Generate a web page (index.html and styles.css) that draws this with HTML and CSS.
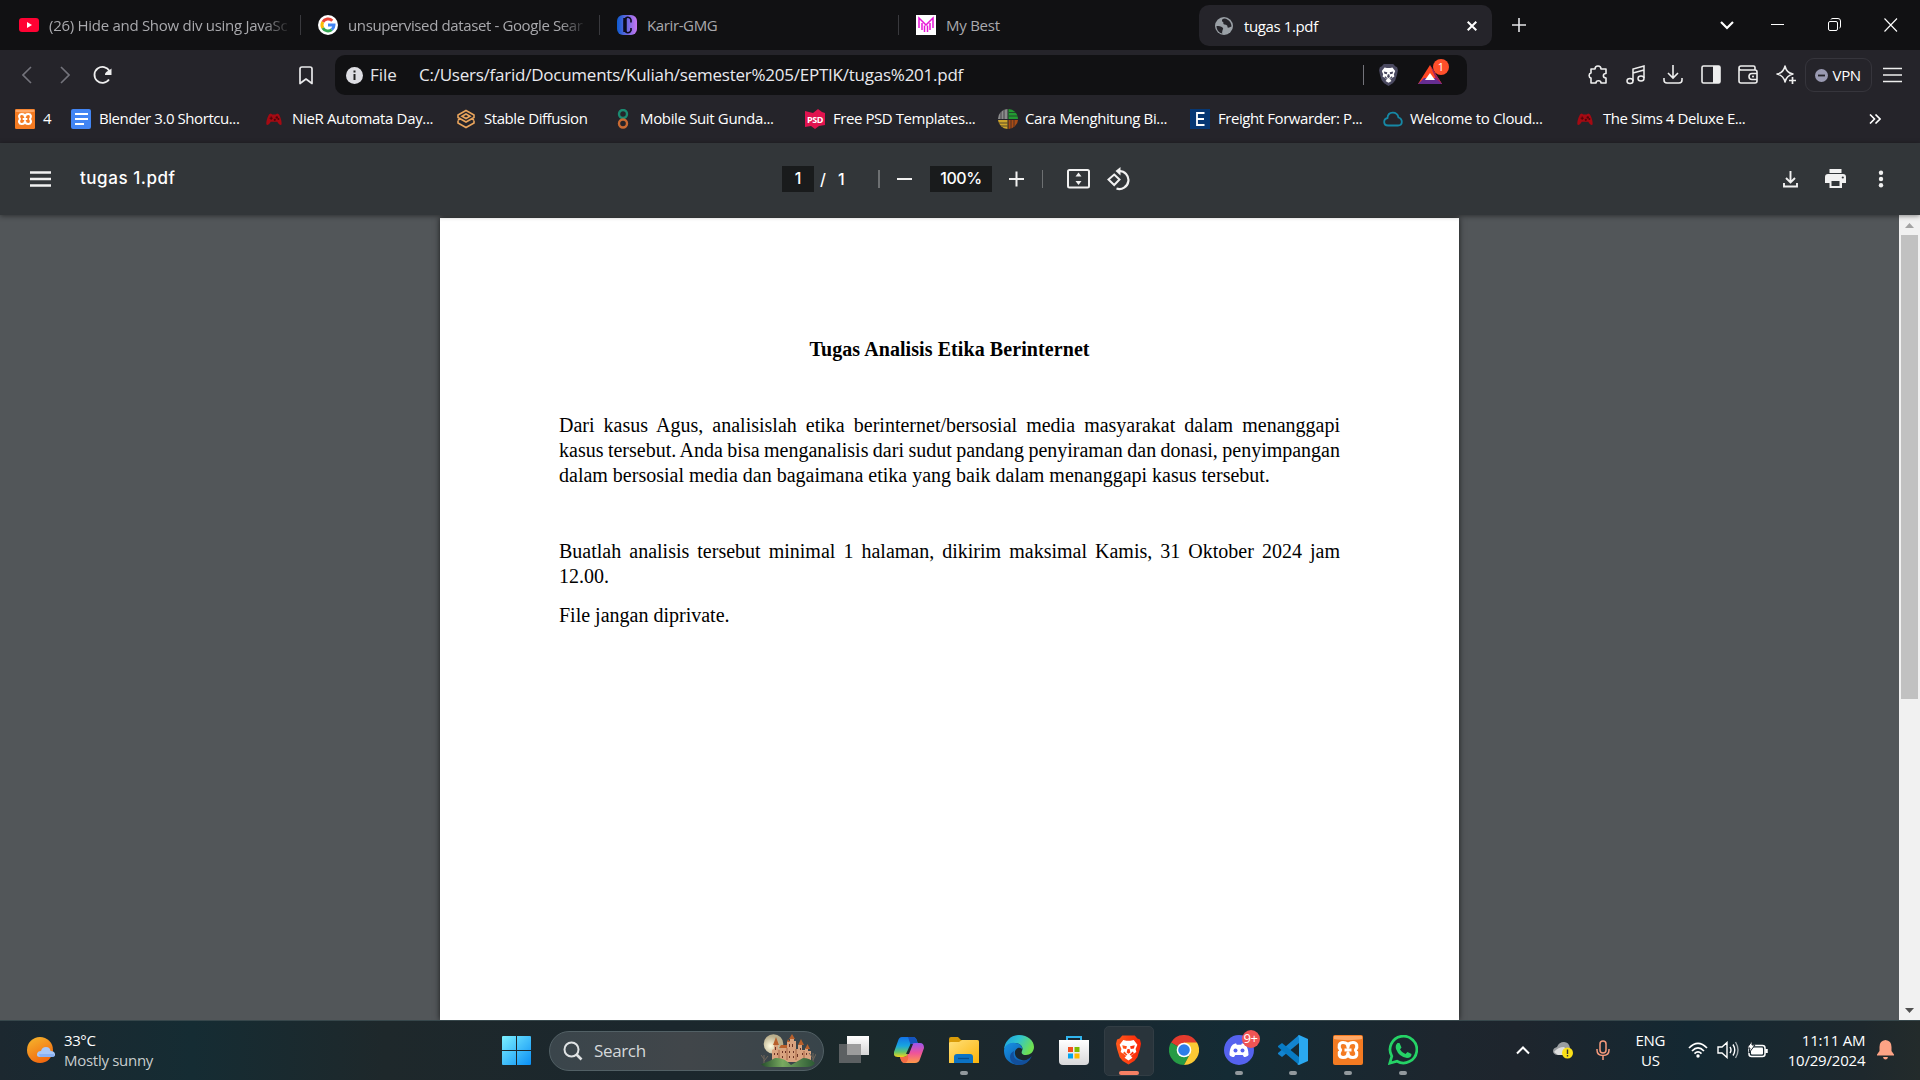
FILE: index.html
```html
<!DOCTYPE html>
<html lang="en">
<head>
<meta charset="utf-8">
<title>tugas 1.pdf</title>
<link rel="stylesheet" href="styles.css">
</head>
<body>
<svg class="defs" width="0" height="0">
  <defs>
    <linearGradient id="win" x1="0" y1="0" x2="1" y2="1"><stop offset="0" stop-color="#7cf0ff"/><stop offset="1" stop-color="#0a8ff5"/></linearGradient>
    <linearGradient id="sun" x1="0" y1="0" x2=".5" y2="1"><stop offset="0" stop-color="#f5b82e"/><stop offset="1" stop-color="#f26a10"/></linearGradient>
    <linearGradient id="cblue" x1="0" y1="0" x2="1" y2="0"><stop offset="0" stop-color="#0c5bd0"/><stop offset="1" stop-color="#c977f0"/></linearGradient>
    <linearGradient id="copA" x1="0" y1="0" x2="0" y2="1"><stop offset="0" stop-color="#1272e8"/><stop offset=".45" stop-color="#18a5df"/><stop offset=".75" stop-color="#63c56a"/><stop offset="1" stop-color="#f5d51c"/></linearGradient>
    <linearGradient id="copB" x1="0" y1="0" x2="0" y2="1"><stop offset="0" stop-color="#9b55ee"/><stop offset=".5" stop-color="#ef539a"/><stop offset="1" stop-color="#ff9a48"/></linearGradient>
    <linearGradient id="fold" x1="0" y1="0" x2="1" y2="1"><stop offset="0" stop-color="#ffe07a"/><stop offset="1" stop-color="#fbb40a"/></linearGradient>
    <linearGradient id="edgeA" x1="0" y1="0" x2="1" y2=".4"><stop offset="0" stop-color="#1b9de2"/><stop offset=".5" stop-color="#2fc3d0"/><stop offset="1" stop-color="#6ee052"/></linearGradient>
    <linearGradient id="edgeB" x1="0" y1="0" x2="1" y2="1"><stop offset="0" stop-color="#1793e6"/><stop offset="1" stop-color="#0c4f9e"/></linearGradient>
    <linearGradient id="store" x1="0" y1="0" x2="0" y2="1"><stop offset="0" stop-color="#fff"/><stop offset="1" stop-color="#d8d8da"/></linearGradient>
    <linearGradient id="brv" x1="0" y1="0" x2="1" y2="0"><stop offset="0" stop-color="#ff5a1c"/><stop offset="1" stop-color="#fb2608"/></linearGradient>
    <radialGradient id="moon" cx=".35" cy=".6"><stop offset="0" stop-color="#fffbe0"/><stop offset="1" stop-color="#b9ae8c"/></radialGradient>
    <linearGradient id="hill" x1="0" y1="0" x2="1" y2="0"><stop offset="0" stop-color="#254e2b"/><stop offset=".4" stop-color="#79aa60"/><stop offset="1" stop-color="#2b5934"/></linearGradient>
    <linearGradient id="task" x1="0" y1="0" x2="0" y2="1"><stop offset="0" stop-color="#fff"/><stop offset="1" stop-color="#d5d5d5"/></linearGradient>
    <symbol id="xampp" viewBox="0 0 30 30"><rect width="30" height="30" rx="2" fill="#f47b22"/><path d="M1 1h28v3c-8 1.500-20 1.500-28 0z" fill="#ffa866"/><path d="M15 12C15 8.500 13 7.500 10 7.500c-4 0-5 4-2.500 7.500C5 18.500 6 22.500 10 22.500c3 0 5-1 5-4.500 0 3.500 2 4.500 5 4.500 4 0 5-4 2.500-7.500C25 11.500 24 7.500 20 7.500c-3 0-5 1-5 4.500zM11.500 15h7" fill="none" stroke="#fff" stroke-width="3.200" stroke-linejoin="round"/></symbol>
    <symbol id="pad" viewBox="0 0 20 20"><path d="M4 4l2-1 2 1.500h4L14 3l2 1c2 3 4 9 3.500 13-1.500 1.500-3 0-5.500-3.500H6C3.500 17 2 18.500.5 17 0 13 2 7 4 4z" fill="#a50a13"/><path d="M4.500 9h4M6.500 7v4" stroke="#4d0508" stroke-width="1.400"/><circle cx="13.500" cy="8" r="1.500" fill="#4d0508"/><circle cx="11" cy="11" r="1.400" fill="#4d0508"/><circle cx="15.500" cy="10" r="1.200" fill="#4d0508"/></symbol>
    <symbol id="lion" viewBox="0 0 24 28"><path d="M6 0h12l2.500 3L23 4l1 4-1 5-2.500 8-3 3.500L12 28l-5.500-3.500-3-3.500L1 13 0 8l1-4 2.500-1z"/><path d="M7 4.500l3 .5h4l3-.5L20.500 9l-1.700 4 .7 3-4 2.500-1.300 1.300 1.600 1.700L12 24l-3.800-2.500 1.600-1.700-1.300-1.300-4-2.500.7-3-1.700-4z" fill="#fff"/><path d="M6 9.500l4.500 1-.7 2.500-3-.5zM18 9.500l-4.500 1 .7 2.500 3-.5zM11 13h2l.8 3.500L12 17.700l-1.800-1.200zM8 15.500l3 3-1 .7-3.300-2.200zM16 15.500l-3 3 1 .7 3.300-2.200z"/></symbol>
  </defs>
</svg>

<header class="tabstrip">
  <div class="tab">
    <svg width="20" height="20"><rect y="3" width="20" height="14" rx="3" fill="#ff0233"/><path d="M8 7v6l5-3z" fill="#fff"/></svg>
    <span class="tab-title fade">(26) Hide and Show div using JavaSc</span>
  </div>
  <div class="tab">
    <svg width="20" height="20"><circle cx="10" cy="10" r="10" fill="#fff"/><g fill="none" stroke-width="3"><path d="M14.300 5.700A6 6 0 0 0 4.800 7" stroke="#ea4335"/><path d="M4.800 7a6 6 0 0 0 0 6" stroke="#fbbc05"/><path d="M4.800 13a6 6 0 0 0 9 1.600" stroke="#34a853"/><path d="M13.800 14.600A6 6 0 0 0 16 10h-6" stroke="#4285f4"/></g></svg>
    <span class="tab-title fade">unsupervised dataset - Google Sear</span>
  </div>
  <div class="tab">
    <svg width="20" height="20"><rect width="20" height="20" rx="6" fill="url(#cblue)"/><path d="M14 7.500V4.500M14 4.500C12.500 1 8 1.500 7.500 6v8c.5 4.500 5 5 6.500 1.500V13" fill="none" stroke="#0b0b1c" stroke-width="1.600"/><path d="M8 3v14" stroke="#0b0b1c" stroke-width="3.500"/></svg>
    <span class="tab-title">Karir-GMG</span>
  </div>
  <div class="tab tab-last">
    <svg width="20" height="20"><rect width="20" height="20" fill="#fff"/><path d="M3 13V3l7 7 7-7v10M6 8v7M8.500 10.500V17M11.500 10.500V17M14 8v7" fill="none" stroke="#e815d8" stroke-width="1.500"/></svg>
    <span class="tab-title">My Best</span>
  </div>
  <div class="tab-active">
    <svg width="18" height="18"><circle cx="9" cy="9" r="9" fill="#9aa0a6"/><path d="M9.500 1.500c-3 0-3 3-1.500 3.500 1 .5-.5 2 1.500 2.500s3 .5 3 2.500 3-.5 4-.5c0-4-3-7.500-7-8zM1.500 9c2.500 0 4.500 0 6 1.500s0 2 0 3-1 2 0 3C4 16 1.500 13 1.500 9z" fill="#25242a"/></svg>
    <span class="tab-title">tugas 1.pdf</span>
    <svg class="tab-close" width="10" height="10"><path d="M.7.7l8.600 8.600M9.300.7L.7 9.300" stroke="#fff" stroke-width="2"/></svg>
  </div>
  <svg class="new-tab" width="14" height="14"><path d="M7 0v14M0 7h14" stroke="#e5e5e8" stroke-width="1.600"/></svg>
  <div class="win-controls">
    <svg class="tabs-list" width="14" height="14"><path d="M1 4l6 6 6-6" fill="none" stroke="#fff" stroke-width="2.200"/></svg>
    <svg width="14" height="14"><path d="M0 6.500h13" stroke="#fff"/></svg>
    <svg width="14" height="14"><g fill="none" stroke="#fff"><rect x=".5" y="3.500" width="9" height="9" rx="1.500"/><path d="M3 1.500Q3 .5 5 .5h5q2.500 0 2.500 2.500v5q0 2-1 2"/></g></svg>
    <svg width="14" height="14"><path d="M.5.5l12.500 13M13 .5L.5 13.500" stroke="#fff" stroke-width="1.100"/></svg>
  </div>
</header>

<nav class="navbar">
  <div class="nav-left">
    <svg width="10" height="18"><path d="M9 1L1 9l8 8" fill="none" stroke="#74747c" stroke-width="1.600"/></svg>
    <svg width="10" height="18"><path d="M1 1l8 8-8 8" fill="none" stroke="#74747c" stroke-width="1.600"/></svg>
    <svg class="reload" width="20" height="20"><path d="M16 14.500A8 8 0 1 1 16.500 6" fill="none" stroke="#eee" stroke-width="1.800"/><path d="M18.500 3.500v6.500h-6.500c0-3.500 3-3.500 6.500-6.500z" fill="#eee"/></svg>
    <svg class="mark" width="14" height="19"><path d="M1 17.500V3q0-2 2-2h8q2 0 2 2v14.500l-6-4.500z" fill="none" stroke="#e8e8ea" stroke-width="1.700" stroke-linejoin="round"/></svg>
  </div>
  <div class="address">
    <svg width="17" height="17"><circle cx="8.500" cy="8.500" r="8.500" fill="#dedee3"/><path d="M8.500 3.500v2M8.500 7v6" stroke="#222" stroke-width="2"/></svg>
    <span class="scheme">File</span>
    <span class="url">C:/Users/farid/Documents/Kuliah/semester%205/EPTIK/tugas%201.pdf</span>
    <i class="address-sep"></i>
    <svg class="shield" width="19" height="22" fill="#4a4960"><use href="#lion" width="19" height="22"/></svg>
    <svg class="bat" width="31" height="26"><path d="M12 6l12 19H0z" fill="#ff4724"/><path d="M0 25h24l-5-6H6z" fill="#662d91"/><path d="M12 6l12 19-6-5z" fill="#9e1f63"/><path d="M12 14l5 7H7z" fill="#fff"/><circle cx="23" cy="8" r="8" fill="#ff4f2b"/><text x="23" y="12" text-anchor="middle" class="badge-num">1</text></svg>
  </div>
  <div class="extensions">
    <svg width="20" height="20"><path d="M3 4h4c0-4 6-4 6 0h5v4.500c-3.500 0-3.500 4.500 0 4.500v5h-5c0-3-5-3-5 0H3v-5c-2.500-.5-2.500-4.500 0-5z" fill="none" stroke="#eee" stroke-width="1.600" stroke-linejoin="round"/></svg>
    <svg width="20" height="20"><path d="M7 16V4l11-3v12M7 8l11-3" fill="none" stroke="#eee" stroke-width="1.500"/><ellipse cx="4" cy="16" rx="3" ry="2.500" fill="none" stroke="#eee" stroke-width="1.500"/><ellipse cx="15" cy="13.500" rx="3" ry="2.500" fill="none" stroke="#eee" stroke-width="1.500"/></svg>
    <svg width="20" height="20"><path d="M10 0v13M5 8l5 5 5-5M1 13v2q0 3 3 3h12q3 0 3-3v-2" fill="none" stroke="#eee" stroke-width="1.600"/></svg>
    <svg width="20" height="20"><rect x="1" y="1" width="18" height="17" rx="1.500" fill="none" stroke="#eee" stroke-width="1.600"/><path d="M12 1h7v17h-7z" fill="#eee"/></svg>
    <svg width="20" height="20"><path d="M17 5V2.500Q17 1 15.500 1H3Q1 1 1 3t2 2h14q2 0 2 2v9q0 2-2 2H3q-2 0-2-2V3M19 8.500h-5q-3 0-3 3t3 3h5" fill="none" stroke="#eee" stroke-width="1.600"/><circle cx="15" cy="11.500" r="1" fill="#eee"/></svg>
    <svg width="20" height="20"><path d="M9 1q1.500 7 8 8-6.500 1.500-8 8-1.500-6.500-8-8 6.500-1 8-8z" fill="none" stroke="#eee" stroke-width="1.500" stroke-linejoin="round"/><path d="M16.500 12v7M13 15.500h7" stroke="#eee" stroke-width="1.700"/></svg>
  </div>
  <div class="vpn"><svg width="13" height="13"><circle cx="6.500" cy="6.500" r="6.500" fill="#9a9ab2"/><path d="M3 6.500h7" stroke="#25242a" stroke-width="1.800"/></svg><span>VPN</span></div>
  <svg class="menu" width="19" height="16"><path d="M0 1.500h19M0 8h19M0 14.500h19" stroke="#eee" stroke-width="1.700"/></svg>
</nav>

<nav class="bookmarks">
  <div class="bm bm-4"><svg width="20" height="20"><use href="#xampp" width="20" height="20"/></svg><span>4</span></div>
  <div class="bm bm-docs"><svg width="20" height="20"><rect width="20" height="20" rx="2" fill="#4285f4"/><path d="M4 5h13M4 10h13M4 15h9" stroke="#fff" stroke-width="2"/></svg><span>Blender 3.0 Shortcu...</span></div>
  <div class="bm bm-nier"><svg width="20" height="20"><use href="#pad" y="2" width="20" height="16"/></svg><span>NieR Automata Day...</span></div>
  <div class="bm bm-sd"><svg width="20" height="20"><path d="M10 1.500l8 4.500v2.500L10 13 2 8.500V6zM2 11.500V14l8 4.500 8-4.500v-2.500M6 7.200l4 2.300 4-2.300L10 5zM2 11l3-1.500M18 11l-3-1.500" fill="none" stroke="#e9a45c" stroke-width="1.600"/></svg><span>Stable Diffusion</span></div>
  <div class="bm bm-suit"><svg width="20" height="20"><circle cx="10" cy="5" r="4" fill="none" stroke="#1b8a71" stroke-width="2.400"/><circle cx="10" cy="14.500" r="4" fill="none" stroke="#c96a33" stroke-width="2.400"/></svg><span>Mobile Suit Gunda...</span></div>
  <div class="bm bm-psd"><svg width="20" height="20"><path d="M0 2l8 2 5-4 4 3 3 1v12l-6 1-4 3-4-3-6 1z" fill="#e0134f"/><text x="10" y="13.500" text-anchor="middle" class="psd">PSD</text></svg><span>Free PSD Templates...</span></div>
  <div class="bm bm-cara"><svg width="20" height="20"><path d="M9.500 0v10H0A10 10 0 0 1 9.500 0z" fill="#8c8c8c"/><path d="M10.500 0v10H20A10 10 0 0 0 10.500 0z" fill="#239b32"/><path d="M9.500 20v-9H0a10 10 0 0 0 9.500 9z" fill="#cda32b"/><path d="M10.500 20v-9H20a10 10 0 0 1-9.500 9z" fill="#a84c16"/><path d="M3 2v8M6 0v10M13 11v9M16 11v8M11 3.500h9M11 7h9M0 14h9.500M0 17h9.500" stroke="#25242a" stroke-width=".7"/></svg><span>Cara Menghitung Bi...</span></div>
  <div class="bm bm-freight"><svg width="20" height="20"><rect width="20" height="20" fill="#063773"/><path d="M14.500 4H7v12h7.500M7 10h7" fill="none" stroke="#fff" stroke-width="1.800"/></svg><span>Freight Forwarder: P...</span></div>
  <div class="bm bm-cloud"><svg width="20" height="20"><path d="M5 16.500C0 16.500 0 10 4.500 9 5 2 14 2 15.500 8.500 20 10 20 16.500 15 16.500z" fill="none" stroke="#1688a5" stroke-width="1.800"/></svg><span>Welcome to Cloud...</span></div>
  <div class="bm bm-sims"><svg width="20" height="20"><use href="#pad" y="2" width="20" height="16"/></svg><span>The Sims 4 Deluxe E...</span></div>
  <svg class="more" width="12" height="10"><path d="M1 .5L5.500 5 1 9.500M6.500.5L11 5 6.500 9.500" fill="none" stroke="#fff" stroke-width="1.600"/></svg>
</nav>

<section class="pdfbar">
  <svg class="pdf-menu" width="21" height="16"><path d="M0 1.500h21M0 8h21M0 14.500h21" stroke="#f1f1f1" stroke-width="2.300"/></svg>
  <span class="pdf-title">tugas 1.pdf</span>
  <div class="pdf-center">
    <span class="page-box">1</span><span class="slash">/</span><span class="total">1</span>
    <i class="pdf-sep"></i>
    <svg class="minus" width="15" height="16"><path d="M0 8h15" stroke="#f1f1f1" stroke-width="2"/></svg>
    <span class="zoom-box">100%</span>
    <svg class="plus" width="15" height="16"><path d="M0 8h15M7.500.5v15" stroke="#f1f1f1" stroke-width="2"/></svg>
    <i class="pdf-sep thin"></i>
    <svg class="fit" width="23" height="20"><rect x="1" y="1" width="21" height="17.500" rx="1.500" fill="none" stroke="#f1f1f1" stroke-width="2"/><path d="M11.500 3.500L14.500 7.500h-6zM11.500 16L8.500 12h6z" fill="#f1f1f1"/></svg>
    <svg class="rotate" width="23" height="24"><path d="M7.200 7.500L12.500 12.500 7.200 18 1.500 12.500z" fill="none" stroke="#f1f1f1" stroke-width="2"/><path d="M12 4a9 9 0 1 1-2.500 17.500" fill="none" stroke="#f1f1f1" stroke-width="2.200"/><path d="M13.500 0v8.500L8.500 4z" fill="#f1f1f1"/></svg>
  </div>
  <div class="pdf-actions">
    <svg width="15" height="17"><path d="M7.500 0v11M3 7l4.500 4.500L12 7M1 12v3.500h13V12" fill="none" stroke="#f1f1f1" stroke-width="1.900"/></svg>
    <svg class="print" width="21" height="20"><path d="M4.500 0h12v4h-12zM3 5h15q3 0 3 3v6h-4v5H4.500v-5H0V8q0-3 3-3z" fill="#f1f1f1"/><path d="M6.500 12h8v5h-8z" fill="#323639"/><circle cx="17.800" cy="8.500" r="1.100" fill="#323639"/></svg>
    <svg class="dots" width="6" height="18"><g fill="#f1f1f1"><circle cx="3" cy="2.700" r="2.200"/><circle cx="3" cy="9" r="2.200"/><circle cx="3" cy="15.300" r="2.200"/></g></svg>
  </div>
</section>

<main class="viewer">
  <article class="paper">
    <h1>Tugas Analisis Etika Berinternet</h1>
    <p>Dari kasus Agus, analisislah etika berinternet/bersosial media masyarakat dalam menanggapi <span class="tight">kasus tersebut. Anda bisa menganalisis dari sudut pandang penyiraman dan donasi, penyimpangan</span> dalam bersosial media dan bagaimana etika yang baik dalam menanggapi kasus tersebut.</p>
    <p class="due">Buatlah analisis tersebut minimal 1 halaman, dikirim maksimal Kamis, 31 Oktober 2024 jam 12.00.</p>
    <p class="note">File jangan diprivate.</p>
  </article>
  <aside class="scrollbar">
    <svg width="21" height="20"><path d="M10.500 8L15 13H6z" fill="#a3a3a3"/></svg>
    <i class="thumb"></i>
    <svg class="down" width="21" height="20"><path d="M10.500 13L15 8H6z" fill="#505050"/></svg>
  </aside>
</main>

<footer class="taskbar">
  <div class="weather">
    <svg width="29" height="28"><circle cx="13" cy="14" r="13" fill="url(#sun)"/><path d="M13 21q-3.500 0-3-3t4-3q1-4 5-4t4.500 4q4 0 4.500 3t-3 3z" fill="#a7c7f8"/><path d="M12 18h15v3H13z" fill="#6e9df0" opacity=".5"/></svg>
    <div><b>33°C</b><span>Mostly sunny</span></div>
  </div>
  <svg class="start" width="29" height="29"><path d="M0 1q0-1 1-1h13v14H0zM15 0h13q1 0 1 1v13H15zM0 15h14v14H1q-1 0-1-1zM15 15h14v13q0 1-1 1H15z" fill="url(#win)"/></svg>
  <div class="search">
    <svg width="20" height="20"><circle cx="8.500" cy="8.500" r="7" fill="none" stroke="#e0e3e4" stroke-width="2"/><path d="M13.500 13.500l5 5" stroke="#e0e3e4" stroke-width="2.600"/></svg>
    <span>Search</span>
    <svg class="castle" width="55" height="33"><circle cx="12.500" cy="10" r="9.800" fill="url(#moon)"/><path d="M11 28V16l2-1v-4h4v4h3v-2h6V7h3V4h4v3h2v8h2v-4h4v5h3v-2h3v3h3v11z" fill="#d9a37f"/><path d="M12 11l3-8 3 8zM28 5l3-5 3 5zM37 11l3-6 3 6zM44 15l2.500-5 2.500 5zM18 14l2-3h6v3zM26 8l1-3 2 3z" fill="#b8602c"/><g fill="#6c3426"><path d="M14 13h1v3h-1zM13 19h1v2h-1zM16 19h1v2h-1zM21 17h1v2h-1zM24 17h1v2h-1zM21 22h1v2h-1zM28 10h1v3h-1zM31 10h1v3h-1zM28 17h1v2h-1zM32 17h1v2h-1zM39 14h1v2h-1zM41 19h1v2h-1zM45 19h1v2h-1zM36 20h1v3h-1zM28 22h1v2h-1zM32 22h1v2h-1z"/></g><path d="M18 16v10M26 14v12M35 15v11M43 17v9" stroke="#a86848"/><path d="M3 30V21M3 25l-3-4M3 27l4-5M52 29V19M52 24l-4-5M52 26l3-6" stroke="#71675b" fill="none"/><path d="M0 30q8-2 14-6 9-1 16 7l12-7q7 0 12 5-2 4-9 4H8q-6 0-8-3z" fill="url(#hill)"/></svg>
  </div>
  <div class="apps">
    <div class="app"><svg width="30" height="30"><path d="M0 9h22v19H0z" fill="#5c6062"/><path d="M8 1h22v19H8z" fill="url(#task)"/><path d="M8 9h14v11H8z" fill="#9c9c9c"/></svg></div>
    <div class="app"><svg width="30" height="30"><path d="M8 2h11q3 0 4 4l1 3h-4q-3 0-4 4l-2 6q-1 3-5 3H4q-5 0-4-5L4 6q1-4 4-4z" fill="url(#copA)"/><path d="M14 2h5q3 0 4 4l1 3h-4q-2 0-3 2z" fill="#1554bd"/><path d="M26 8q4 0 4 5l-4 11q-1 4-5 4H11q-3 0-4-3l-1-3h4q3 0 4-3l3-8q1-3 4-3z" fill="url(#copB)"/><path d="M12 19l4.500-10h2.500l-4 10z" fill="#1b2830"/><path d="M6 22h4q3 0 4-3 1 8-3 9-3 0-4-3z" fill="#f36c45"/></svg></div>
    <div class="app open"><svg width="30" height="30"><path d="M0 4q0-2 2-2h7l3 3h16q2 0 2 2v6H0z" fill="#d99b08"/><path d="M0 8q0-1 2-1h8l3-2h15q2 0 2 2v21H0z" fill="url(#fold)"/><path d="M5 28v-6q0-3 3-3h13q3 0 3 3v6z" fill="#0c73c4"/><path d="M9 23.500h11" stroke="#0a4d8a" stroke-width="1.300"/></svg></div>
    <div class="app"><svg width="30" height="30"><path d="M0 15A15 15 0 0 1 15 0c9 0 15 6 15 12 0 5-4 8-8 8-4 0-5-2-4-4 2-4-2-8-7-8S1 11 0 15z" fill="url(#edgeA)"/><path d="M0 15c1-5 6-8 11-7 5 0 8 4 7 6-3-3-8 0-7 5 1 6 9 8 15 5-5 7-14 7-19 4S0 21 0 15z" fill="url(#edgeB)"/><path d="M10 16q-2 9 7 10 6 0 11-5-4 9-13 9-9-1-9-8 0-4 4-6z" fill="#124f9b"/></svg></div>
    <div class="app"><svg width="30" height="30"><path d="M8 6V2h14v4" fill="none" stroke="#31b5ee" stroke-width="2"/><path d="M0 5h30v21q0 4-4 4H4q-4 0-4-4z" fill="url(#store)"/><path d="M9 12h5v5H9z" fill="#f25022"/><path d="M15.500 12h5v5h-5z" fill="#7fba00"/><path d="M9 18.500h5v5H9z" fill="#00a4ef"/><path d="M15.500 18.500h5v5h-5z" fill="#ffb900"/></svg></div>
    <div class="app open current"><svg width="25" height="30" fill="url(#brv)"><use href="#lion" width="25" height="30"/></svg></div>
    <div class="app"><svg width="30" height="30"><path d="M15 15L2 7.500A15 15 0 0 1 28 7.500z" fill="#e33b2e"/><path d="M15 15L2 7.500A15 15 0 0 0 15 30l6-11z" fill="#269b45"/><path d="M15 15l6 4-6 11A15 15 0 0 0 28 7.500H15z" fill="#fcc934"/><circle cx="15" cy="15" r="7.300" fill="#fff"/><circle cx="15" cy="15" r="5.800" fill="#2d7de9"/></svg></div>
    <div class="app open"><svg width="30" height="30"><circle cx="15" cy="15" r="15" fill="#5562ee"/><path d="M10 9l2-.7.8 1.400h4.400l.8-1.400L20 9c3 1 4.500 6 4.500 11-1 1.500-3 2-4.500 2l-1.300-2h-7.400L10 22c-2 0-3.500-.5-4.500-2C5.500 15 7 10 10 9z" fill="#fff"/><circle cx="11.500" cy="15.500" r="2" fill="#5562ee"/><circle cx="18.500" cy="15.500" r="2" fill="#5562ee"/></svg><em class="count">9+</em></div>
    <div class="app open"><svg width="30" height="30"><path d="M21 0v8L4 22l-4-3v-1L21 0z" fill="#1384cf"/><path d="M0 11l4-3 17 14v8L0 12z" fill="#087bc4"/><path d="M21 0l9 4v22l-9 4-2-1q2 0 2-3V4q0-3-1-3z" fill="#2aa8f0"/></svg></div>
    <div class="app open"><svg width="30" height="30"><use href="#xampp" width="30" height="30"/></svg></div>
    <div class="app open"><svg width="30" height="30"><path d="M1.800 28.200l2-7A13.400 13.400 0 1 1 9 26.300z" fill="none" stroke="#25d366" stroke-width="2.700"/><path d="M9.500 8h2l2 4.500-1.500 2q2 3.500 5.500 4.500l2-2 4 2q0 4-4.500 4Q11 22 8 14q-1-4 1.500-6z" fill="#25d366"/></svg></div>
  </div>
  <div class="tray">
    <svg class="t-up" width="14" height="9"><path d="M1 7.500l6-6 6 6" fill="none" stroke="#fff" stroke-width="2"/></svg>
    <svg class="t-cloud" width="21" height="18"><path d="M4 14q-4-1-4-4t4-4q2-5 7-5t6 6l2 7z" fill="#9a9da0"/><path d="M1 11q4-5 10-5l4 4-3 4H5z" fill="#dedede"/><circle cx="14.500" cy="12" r="5.500" fill="#fbe017"/><path d="M14.500 8.500v4.500M14.500 14v1.500" stroke="#333" stroke-width="1.400"/></svg>
    <svg class="t-mic" width="14" height="20"><g fill="none" stroke="#f59a7c" stroke-width="1.500"><rect x="4" y="1" width="6" height="12" rx="3"/><path d="M1 9v1q0 5.500 6 5.500T13 10V9M7 16v4"/></g></svg>
    <div class="lang">ENG<br>US</div>
    <svg class="t-wifi" width="20" height="16"><g fill="none" stroke="#fff" stroke-width="1.700"><path d="M1 6q9-9 18 0M4 9q6-6 12 0M6.500 11.700q3.500-3.500 7 0"/></g><circle cx="10" cy="14" r="1.700" fill="#fff"/></svg>
    <svg class="t-vol" width="22" height="18"><g fill="none" stroke="#fff" stroke-width="1.400"><path d="M1 6h4l5-4.500v15L5 12H1zM13 6q2 3 0 6M16 3.500q3.500 5.500 0 11"/><path d="M18.500 1q5 8 0 16" opacity=".6"/></g></svg>
    <svg class="t-bat" width="22" height="18"><rect x="2" y="4.500" width="16" height="11" rx="2.500" fill="none" stroke="#fff" stroke-width="1.500"/><rect x="4" y="6.500" width="12" height="7" rx="1" fill="#fff"/><path d="M19.500 8v4" stroke="#fff" stroke-width="2.500"/><path d="M5 0L0 7h3l-1 5 6-8H5z" fill="#fff" stroke="#1a252d"/></svg>
    <div class="clock">11:11 AM<br>10/29/2024</div>
    <svg class="t-bell" width="17" height="20"><path d="M8.500 0q6 .5 6 7v4l2.500 3.500v1H0v-1L2.500 11V7q0-6.500 6-7zM6 17h5q-.5 2.500-2.500 2.500T6 17z" fill="#fda385"/></svg>
  </div>
</footer>
</body>
</html>
```
FILE: styles.css
```css
* { box-sizing: border-box; }
body {
  margin: 0;
  width: 1920px;
  height: 1080px;
  overflow: hidden;
  display: flex;
  flex-direction: column;
  background: #525659;
  color: #fff;
  font: 15px/20px "Open Sans", "Noto Sans", sans-serif;
}
.defs { position: absolute; }
svg { display: block; flex: none; }
span, div { white-space: nowrap; }

/* Tab strip */
.tabstrip {
  display: flex;
  align-items: center;
  height: 50px;
  flex: none;
  background: #111113;
  letter-spacing: -0.380px;
}
.tab {
  display: flex;
  align-items: center;
  gap: 10px;
  width: 299px;
  height: 20px;
  padding-left: 17px;
  border-right: 1px solid #39393d;
  color: #a9a9ad;
}
.tab:first-child { width: 301px; padding-left: 19px; letter-spacing: -0.280px; }
.tab-last { border: 0; width: 300px; }
.tab-last .tab-title { letter-spacing: -0.250px; }
.fade {
  mask-image: linear-gradient(90deg, #000 90%, rgba(0, 0, 0, .15) 100%);
}
.tab-active {
  display: flex;
  align-items: center;
  width: 293px;
  height: 41px;
  padding: 0 15px 0 16px;
  gap: 11px;
  margin-top: 1px;
  border-radius: 10px;
  background: #25242a;
}
.tab-close { margin-left: auto; }
.new-tab { margin-left: 20px; }
.win-controls {
  display: flex;
  gap: 42.500px;
  margin: 0 22px 0 auto;
}
.tabs-list { margin-right: -5px; }

/* Navigation row */
.navbar {
  display: flex;
  align-items: center;
  height: 50px;
  flex: none;
  background: #25242a;
}
.nav-left {
  display: flex;
  align-items: center;
  width: 335px;
  padding-left: 22px;
}
.nav-left svg + svg { margin-left: 28px; }
.nav-left .reload { margin-left: 23px; }
.nav-left .mark { margin-left: 186px; }
.address {
  display: flex;
  align-items: center;
  width: 1132px;
  height: 40px;
  padding-left: 11px;
  border-radius: 10px;
  background: #111113;
  font-size: 17px;
}
.scheme { width: 49px; margin-left: 7px; color: #e4e4e8; }
.url { width: 944px; color: #e9e9ee; letter-spacing: -0.240px; }
.address-sep { width: 1px; height: 20px; background: #73737a; }
.shield { margin-left: 15px; }
.bat { margin: -6px 0 0 20px; }
.badge-num { font: 11px "Open Sans", sans-serif; fill: #fff; }
.extensions { display: flex; gap: 17.500px; margin-left: 121px; }
.vpn {
  display: flex;
  align-items: center;
  gap: 5px;
  width: 67px;
  height: 34px;
  margin-left: 9px;
  padding-left: 9px;
  border: 1px solid #36353c;
  border-radius: 9px;
  letter-spacing: -0.300px;
}
.menu { margin-left: 11px; }

/* Bookmarks */
.bookmarks {
  display: flex;
  align-items: center;
  height: 43px;
  flex: none;
  padding: 0 0 5px 15px;
  background: #25242a;
  letter-spacing: -0.430px;
}
.bm { display: flex; gap: 8px; flex: none; }
.bm span { line-height: 18px; }
.bm-4 { width: 56px; }
.bm-docs { width: 193px; }
.bm-nier { width: 192px; letter-spacing: -0.350px; }
.bm-sd { width: 157px; }
.bm-suit { width: 192px; gap: 7px; letter-spacing: -0.350px; }
.bm-psd { width: 193px; }
.bm-cara { width: 192px; gap: 7px; letter-spacing: -0.350px; }
.bm-freight { width: 193px; }
.bm-cloud { width: 192px; gap: 7px; letter-spacing: -0.350px; }
.bm-sims { width: 294px; }
.psd { font: bold 9px "Open Sans", sans-serif; fill: #fff; }

/* PDF toolbar */
.pdfbar {
  display: flex;
  align-items: center;
  height: 72px;
  flex: none;
  padding-left: 30px;
  background: #323639;
  box-shadow: 0 1px 5px rgba(0, 0, 0, .45);
  z-index: 1;
  font: 500 16px/20px Inter, "Open Sans", sans-serif;
}
.pdf-title {
  width: 702px;
  margin-left: 29px;
  padding-bottom: 2px;
  font-size: 17px;
  letter-spacing: .550px;
}
.pdf-center { display: flex; align-items: center; }
.page-box, .zoom-box {
  width: 32px;
  height: 26px;
  padding-top: 2px;
  text-align: center;
  background: #191b1c;
}
.zoom-box { width: 62px; margin-left: 18px; letter-spacing: -0.400px; }
.slash { width: 18px; margin-left: 6px; }
.total { width: 40px; padding-bottom: 1px; }
.pdf-sep { width: 2px; height: 18px; background: #6d7072; }
.minus { margin-left: 17px; }
.plus { margin: 0 17px; }
.thin { width: 1px; margin-left: 1px; }
.fit { margin-left: 24px; }
.rotate { margin-left: 17px; }
.pdf-actions { display: flex; align-items: center; margin-left: auto; padding-right: 36px; }
.print { margin: 0 32px 0 27px; }

/* Document area */
.viewer { display: flex; height: 805px; flex: none; justify-content: flex-end; }
.paper {
  width: 1019px;
  height: 802px;
  margin: 3px 440px 0 0;
  padding: 119px 119px 0 119px;
  background: #fff;
  color: #000;
  box-shadow: 0 0 6px rgba(0, 0, 0, .7);
  font: 20px/25.200px "Liberation Serif", serif;
}
.paper h1 {
  margin: 0 0 51px;
  font: bold 20px/25px "Liberation Serif", serif;
  letter-spacing: .080px;
  text-align: center;
}
.paper p { margin: 0; text-align: justify; }
.paper .tight { white-space: normal; word-spacing: -1.200px; }
.paper .due { margin-top: 50.500px; }
.paper .note { margin-top: 13px; }
.scrollbar {
  display: flex;
  flex-direction: column;
  align-items: center;
  width: 21px;
  background: #f1f1f1;
}
.thumb { width: 17px; height: 464px; background: #c1c1c1; }
.down { margin-top: auto; }

/* Taskbar */
.taskbar {
  display: flex;
  align-items: center;
  height: 60px;
  flex: none;
  border-top: 1px solid #37474b;
  background: linear-gradient(90deg, #1c2830 0, #152c33 10%, #1e282b 20%, #1b272d 35%, #1b292b 45%, #1b272f 55%, #142b34 64%, #1d262e 75%, #1e252d 79%, #142832 88%, #1e282d 97%, #232b2b 100%);
}
.weather {
  display: flex;
  align-items: center;
  gap: 8px;
  width: 475px;
  margin: -2px 0 0 27px;
  line-height: 20px;
}
.weather div { display: flex; flex-direction: column; }
.weather b { font-weight: 400; letter-spacing: -0.400px; }
.weather span { color: #c8cdce; letter-spacing: -0.280px; }
.search {
  display: flex;
  align-items: center;
  width: 275px;
  height: 40px;
  margin-left: 18px;
  padding: 0 7px 0 13px;
  border: 1px solid #526065;
  border-radius: 20px;
  background: linear-gradient(90deg, #3a454b, #41464a 50%, #38444a);
  font-size: 17px;
}
.search span { margin-left: 11px; color: #d5d8da; letter-spacing: -0.350px; }
.castle { margin-left: auto; }
.apps { display: flex; }
.app {
  position: relative;
  display: flex;
  align-items: center;
  justify-content: center;
  width: 50px;
  height: 50px;
  margin: 0 0 0 4.950px;
  border-radius: 5px;
}
.app > svg { margin-top: -1px; }
.open::after {
  content: "";
  position: absolute;
  bottom: 1px;
  left: 21px;
  width: 8px;
  height: 4px;
  border-radius: 2px;
  background: #92999d;
}
.current { background: #29343b; border: 1px solid #323d44; }
.current::after { bottom: 0; left: 14px; width: 20px; background: #f58064; }
.count {
  position: absolute;
  top: 4px;
  right: 4px;
  width: 18px;
  height: 18px;
  border-radius: 9px;
  background: #f05454;
  font: 13px/17px "Open Sans", sans-serif;
  text-align: center;
  letter-spacing: -0.500px;
}
.tray { display: flex; align-items: center; flex: 1; font-size: 15px; }
.tray > svg { margin-top: -1px; }
.t-up { margin-left: 88px; }
.t-cloud { margin-left: 23px; }
.t-mic { margin-left: 22px; }
.lang { width: 50px; margin: -2px 0 0 15px; text-align: center; letter-spacing: -0.300px; }
.t-wifi { margin-left: 13px; }
.t-vol { margin-left: 9px; }
.t-bat { margin-left: 8px; }
.clock { width: 96px; margin-top: -2px; text-align: right; letter-spacing: -0.200px; }
.t-bell { margin-left: 12px; }
```
